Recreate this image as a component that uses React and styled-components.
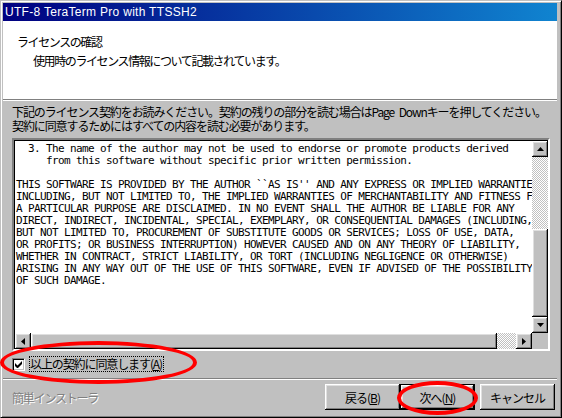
import React from 'react'
import styled, { createGlobalStyle, css } from 'styled-components'

const GlobalStyle = createGlobalStyle`
  html, body {
    margin: 0;
    padding: 0;
    background: #c0c0c0;
  }
  body {
    font-family: "Noto Sans CJK JP", "Liberation Sans", sans-serif;
  }
  * { box-sizing: border-box; }
`

const raised = css`
  background: #c0c0c0;
  box-shadow: inset -1px -1px #000, inset 1px 1px #fff,
    inset -2px -2px #808080, inset 2px 2px #dfdfdf;
`

const dither = css`
  background: repeating-conic-gradient(#c0c0c0 0 25%, #fff 0 50%) 0 0 / 2px 2px;
`

const Window = styled.div`
  position: relative;
  width: 562px;
  height: 418px;
  display: flex;
  flex-direction: column;
  background: #c0c0c0;
  border: 1px solid;
  border-color: #c0c0c0 #000 #000 #c0c0c0;
  box-shadow: inset 1px 1px #fff, inset -1px -1px #808080;
  padding: 2px 4px 2px 2px;
`

const TitleBar = styled.div`
  height: 18px;
  flex: none;
  display: flex;
  align-items: center;
  padding-left: 2px;
  background: linear-gradient(90deg, #000080 0%, #1084d0 100%);
  color: #fff;
  font-family: "Liberation Sans", "Noto Sans CJK JP", sans-serif;
  font-size: 12px;
  letter-spacing: 0.3px;
`

const Header = styled.div`
  height: 78px;
  flex: none;
  background: #fff;
  padding: 11px 0 0 14px;
  font-size: 12px;
  line-height: 19px;
  letter-spacing: -1.4px;
  color: #000;
`

const SubTitle = styled.div`
  padding-left: 16px;
`

const Separator = styled.div`
  height: 2px;
  flex: none;
  border-top: 1px solid #808080;
  border-bottom: 1px solid #fff;
`

const Body = styled.div`
  flex: 1;
  display: flex;
  flex-direction: column;
  padding: 4px 7px 0 9px;
`

const Instruction = styled.div`
  font-size: 12px;
  line-height: 14px;
  letter-spacing: -1.1px;
  word-spacing: 3px;
  color: #000;
  white-space: nowrap;
`

const Sunken = styled.div`
  margin-top: 5px;
  width: 538px;
  height: 213px;
  border: 2px solid;
  border-color: #808080 #fff #fff #808080;
  box-shadow: inset 1px 1px #000, inset -1px -1px #c0c0c0;
  display: grid;
  grid-template-columns: 1fr 16px;
  grid-template-rows: 1fr 16px;
  background: #fff;
`

const LicenseText = styled.div`
  overflow: hidden;
  white-space: pre;
  padding: 2px 0 0 1px;
  margin: 1px 0 0 1px;
  font-family: "DejaVu Sans Mono", "Liberation Mono", monospace;
  font-size: 11px;
  letter-spacing: -0.62px;
  line-height: 12px;
  color: #000;
`

const VScroll = styled.div`
  display: flex;
  flex-direction: column;
  margin-top: 1px;
`

const HScroll = styled.div`
  display: flex;
  margin-left: 1px;
`

const Track = styled.div`
  flex: ${({ $size }) => ($size ? `0 0 ${$size}px` : '1')};
  ${dither}
`

const Thumb = styled.div`
  flex: ${({ $size }) => ($size ? `0 0 ${$size}px` : '1')};
  ${raised}
`

const Corner = styled.div`
  background: #c0c0c0;
`

const ArrowButton = styled.div`
  flex: 0 0 16px;
  width: 16px;
  height: 16px;
  display: flex;
  align-items: center;
  justify-content: center;
  ${raised}
`

const CheckRow = styled.label`
  margin-top: 5px;
  height: 16px;
  display: flex;
  align-items: center;
`

const Box = styled.span`
  width: 13px;
  height: 13px;
  flex: none;
  background: #fff;
  border: 1px solid;
  border-color: #808080 #fff #fff #808080;
  box-shadow: inset 1px 1px #000, inset -1px -1px #c0c0c0;
  display: flex;
  align-items: center;
  justify-content: center;
`

const CheckLabel = styled.span`
  margin-left: 4px;
  height: 16px;
  padding: 0 2px 0 1px;
  outline: 1px dotted #000;
  outline-offset: -1px;
  font-size: 12px;
  line-height: 16px;
  letter-spacing: -1.1px;
  color: #000;
  white-space: nowrap;

  u { text-decoration: underline; text-underline-offset: 1px; }
`

const Footer = styled.div`
  height: 35px;
  flex: none;
  display: flex;
  align-items: center;
  padding: 4px 2px 5px 9px;
`

const Brand = styled.div`
  flex: 1;
  font-size: 12px;
  letter-spacing: -1.2px;
  color: #808080;
  text-shadow: 1px 1px #fff;
`

const Button = styled.button`
  width: 75px;
  height: 26px;
  margin-left: ${({ $gap }) => $gap}px;
  border: none;
  padding: 0;
  font-family: "Noto Sans CJK JP", "Liberation Sans", sans-serif;
  font-size: 12px;
  letter-spacing: -1px;
  color: #000;
  ${raised}
  ${({ $default }) =>
    $default &&
    css`
      box-shadow: inset 0 0 0 1px #000, inset -2px -2px #000, inset 2px 2px #fff,
        inset -3px -3px #808080, inset 3px 3px #dfdfdf;
    `}

  u { text-decoration: underline; text-underline-offset: 1px; }
`

const Mark = styled.div`
  position: absolute;
  left: ${({ $x }) => $x}px;
  top: ${({ $y }) => $y}px;
  width: ${({ $w }) => $w}px;
  height: ${({ $h }) => $h}px;
  border: 4px solid #ff0000;
  border-radius: 50%;
  pointer-events: none;
`

const ARROWS = {
  up: { w: 7, h: 4, pts: '3.5,0 7,4 0,4' },
  down: { w: 7, h: 4, pts: '0,0 7,0 3.5,4' },
  left: { w: 4, h: 7, pts: '4,0 4,7 0,3.5' },
  right: { w: 4, h: 7, pts: '0,0 4,3.5 0,7' },
}

const Arrow = ({ dir }) => {
  const a = ARROWS[dir]
  return (
    <ArrowButton>
      <svg width={a.w} height={a.h} viewBox={`0 0 ${a.w} ${a.h}`}>
        <polygon points={a.pts} fill="#000" />
      </svg>
    </ArrowButton>
  )
}

const license = [
  '  3. The name of the author may not be used to endorse or promote products derived',
  '     from this software without specific prior written permission.',
  '',
  "THIS SOFTWARE IS PROVIDED BY THE AUTHOR ``AS IS'' AND ANY EXPRESS OR IMPLIED WARRANTIES,",
  'INCLUDING, BUT NOT LIMITED TO, THE IMPLIED WARRANTIES OF MERCHANTABILITY AND FITNESS FOR',
  'A PARTICULAR PURPOSE ARE DISCLAIMED. IN NO EVENT SHALL THE AUTHOR BE LIABLE FOR ANY',
  'DIRECT, INDIRECT, INCIDENTAL, SPECIAL, EXEMPLARY, OR CONSEQUENTIAL DAMAGES (INCLUDING,',
  'BUT NOT LIMITED TO, PROCUREMENT OF SUBSTITUTE GOODS OR SERVICES; LOSS OF USE, DATA,',
  'OR PROFITS; OR BUSINESS INTERRUPTION) HOWEVER CAUSED AND ON ANY THEORY OF LIABILITY,',
  'WHETHER IN CONTRACT, STRICT LIABILITY, OR TORT (INCLUDING NEGLIGENCE OR OTHERWISE)',
  'ARISING IN ANY WAY OUT OF THE USE OF THIS SOFTWARE, EVEN IF ADVISED OF THE POSSIBILITY',
  'OF SUCH DAMAGE.',
].join('\n')

export default function App() {
  return (
    <>
      <GlobalStyle />
      <Window>
        <TitleBar>UTF-8 TeraTerm Pro with TTSSH2</TitleBar>
        <Header>
          <div>ライセンスの確認</div>
          <SubTitle>使用時のライセンス情報について記載されています。</SubTitle>
        </Header>
        <Separator />
        <Body>
          <Instruction>
            下記のライセンス契約をお読みください。契約の残りの部分を読む場合はPage Downキーを押してください。
            <br />
            契約に同意するためにはすべての内容を読む必要があります。
          </Instruction>
          <Sunken>
            <LicenseText>{license}</LicenseText>
            <VScroll>
              <Arrow dir="up" />
              <Track $size={72} />
              <Thumb />
              <Arrow dir="down" />
            </VScroll>
            <HScroll>
              <Arrow dir="left" />
              <Thumb />
              <Track $size={19} />
              <Arrow dir="right" />
            </HScroll>
            <Corner />
          </Sunken>
          <CheckRow>
            <Box>
              <svg width="7" height="7" viewBox="0 0 7 7">
                <path d="M0 2v3l2 2h1l4-4V0L2.5 4.5z" fill="#000" />
              </svg>
            </Box>
            <CheckLabel>
              以上の契約に同意します(<u>A</u>)
            </CheckLabel>
          </CheckRow>
        </Body>
        <Separator />
        <Footer>
          <Brand>簡単インストーラ</Brand>
          <Button>
            戻る(<u>B</u>)
          </Button>
          <Button $default $gap={0}>
            次へ(<u>N</u>)
          </Button>
          <Button $gap={5}>キャンセル</Button>
        </Footer>
        <Mark $x={-1} $y={340} $w={197} $h={43} />
        <Mark $x={396} $y={380} $w={81} $h={34} />
      </Window>
    </>
  )
}
